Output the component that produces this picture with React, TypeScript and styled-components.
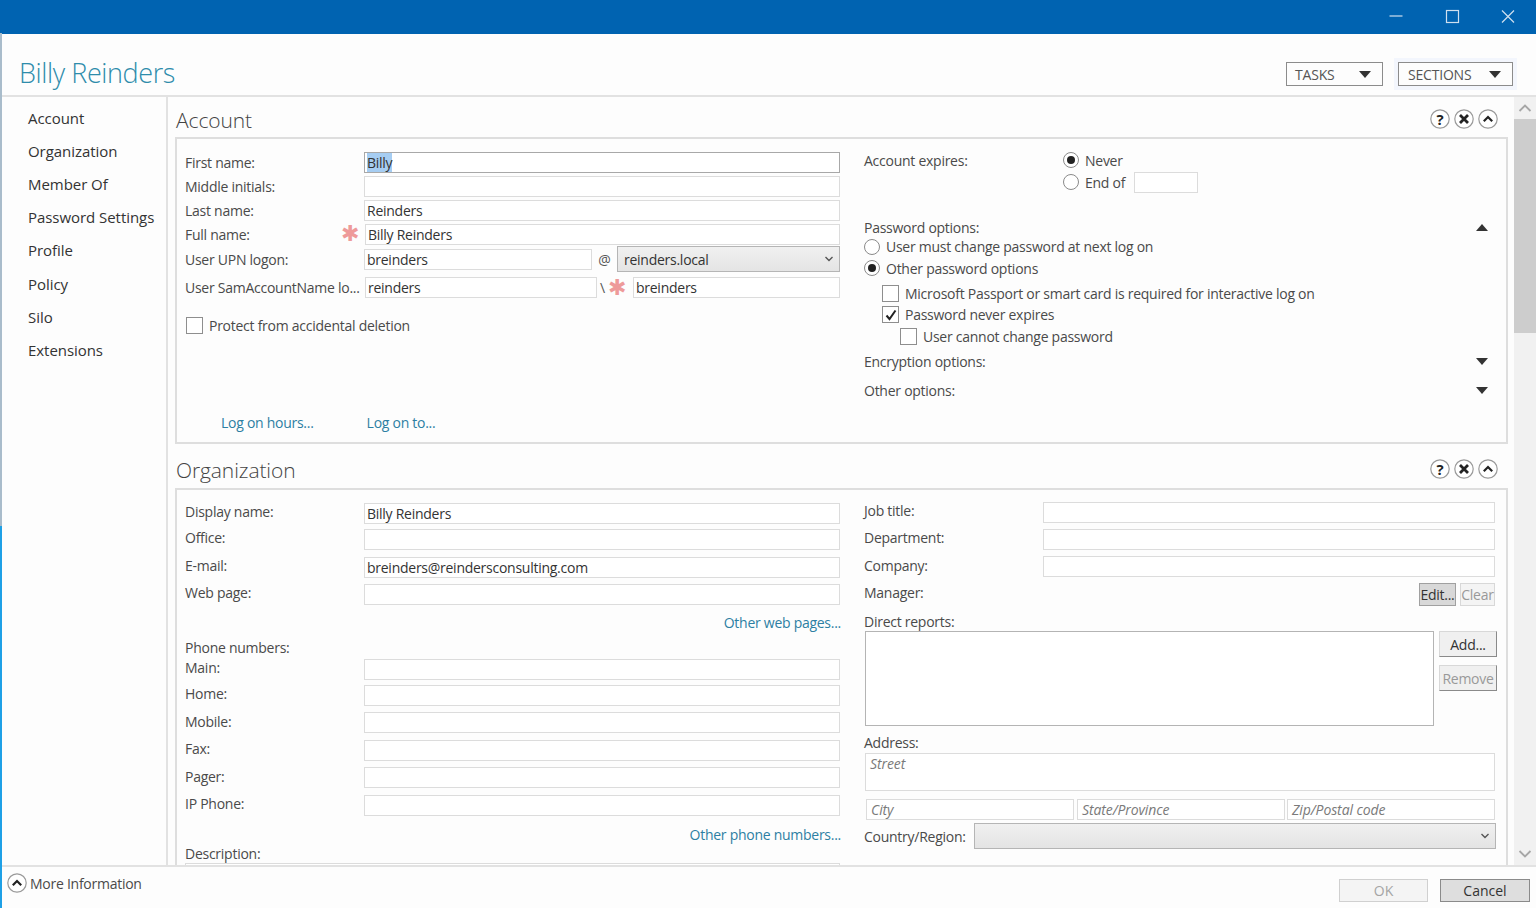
import { ReactNode } from 'react'
import styled, { createGlobalStyle } from 'styled-components'

const GlobalStyle = createGlobalStyle`
  html, body {
    margin: 0;
    padding: 0;
    overflow: hidden;
  }
  * {
    box-sizing: border-box;
  }
`

const Window = styled.div`
  width: 1536px;
  height: 908px;
  display: flex;
  flex-direction: column;
  background: #fdfdfd;
  color: #3c3c3c;
  font-family: 'Open Sans', 'Noto Sans', sans-serif;
  font-size: 14px;
  border-left: 2px solid;
  border-image: linear-gradient(to bottom, #0063b1 34px, #a9bccb 34px, #a9bccb 526px, #1ea0e6 526px) 1;
  overflow: hidden;
`

const TitleBar = styled.div`
  height: 34px;
  flex: none;
  margin-left: -2px;
  background: #0063b1;
  display: flex;
  justify-content: flex-end;
  align-items: center;
  padding-right: 17px;
  gap: 33.5px;
`

const WindowIcon = styled.svg`
  width: 22px;
  height: 22px;
  fill: none;
  stroke: #cfe0ef;
  stroke-width: 1.2;
`

const Header = styled.div`
  height: 63px;
  flex: none;
  display: flex;
  align-items: center;
  justify-content: space-between;
  border-bottom: 2px solid #e2e2e2;
  padding: 14px 23px 0 17px;
`

const Title = styled.h1`
  margin: 2px 0 0;
  font-size: 27px;
  font-weight: 300;
  letter-spacing: -0.4px;
  color: #2e8cab;
`

const HeaderButtons = styled.div`
  display: flex;
  gap: 15px;
  align-items: center;
  margin-top: 5px;
`

const DropButton = styled.div<{ $width: number; $glow?: boolean }>`
  width: ${(p) => p.$width}px;
  height: 24px;
  border: 1px solid #8c8c8c;
  display: flex;
  align-items: center;
  justify-content: space-between;
  padding: 0 11px 0 ${(p) => (p.$glow ? 9 : 8)}px;
  color: #555;
  font-size: 14px;
  letter-spacing: -0.2px;
  box-shadow: ${(p) => (p.$glow ? '0 0 0 4px #f3f6fd' : 'none')};
`

const DownArrow = styled.span<{ $up?: boolean }>`
  width: 0;
  height: 0;
  border-left: 6px solid transparent;
  border-right: 6px solid transparent;
  border-top: ${(p) => (p.$up ? '0' : '7px solid #333')};
  border-bottom: ${(p) => (p.$up ? '7px solid #333' : '0')};
`

const Body = styled.div`
  flex: 1;
  min-height: 0;
  display: flex;
`

const Nav = styled.nav`
  width: 166px;
  flex: none;
  border-right: 2px solid #e2e2e2;
  padding: 4px 0 0 26px;
`

const NavItem = styled.div`
  height: 33.2px;
  display: flex;
  align-items: center;
  font-size: 15px;
  letter-spacing: -0.05px;
  color: #333;
`

const Content = styled.main`
  flex: 1;
  min-width: 0;
  overflow: hidden;
  padding: 0 6px 0 7px;
`

const SectionHead = styled.div<{ $next?: boolean }>`
  height: ${(p) => (p.$next ? 29 : 40)}px;
  display: flex;
  align-items: center;
  justify-content: space-between;
  padding: ${(p) => (p.$next ? '0 10px 8px 1px' : '6px 10px 0 1px')};
`

const SectionTitle = styled.h2`
  margin: 0;
  font-size: 21px;
  font-weight: 300;
  letter-spacing: -0.1px;
  color: #444;
`

const RoundButtons = styled.div`
  display: flex;
  gap: 4px;
  margin-top: -2px;
`

const RoundIcon = styled.svg`
  width: 20px;
  height: 20px;
  display: block;
  flex: none;
`

const Panel = styled.section<{ $height?: number }>`
  border: 2px solid #dedede;
  height: ${(p) => (p.$height ? `${p.$height}px` : 'auto')};
  display: grid;
  grid-template-columns: 655px 632px;
  column-gap: 24px;
  padding: 10px 10px 0 8px;
  margin-bottom: 15px;
`

const Col = styled.div<{ $top?: number }>`
  display: flex;
  flex-direction: column;
  min-width: 0;
  padding-top: ${(p) => p.$top ?? 0}px;
`

const Row = styled.div<{ $h: number }>`
  height: ${(p) => p.$h}px;
  display: flex;
  align-items: center;
  flex: none;
`

const Label = styled.div<{ $w: number; $up?: number }>`
  width: ${(p) => p.$w}px;
  flex: none;
  padding-bottom: ${(p) => Math.max(p.$up ?? 0, 0)}px;
  padding-top: ${(p) => Math.max(-(p.$up ?? 0), 0)}px;
  display: flex;
  justify-content: space-between;
  align-items: center;
  white-space: nowrap;
  color: #4a4a4a;
  letter-spacing: -0.26px;
`

const Field = styled.div<{ $w?: number; $h?: number; $focus?: boolean; $trim?: boolean; $ml?: number; $stacked?: boolean }>`
  flex: ${(p) => (p.$w || p.$stacked ? 'none' : '1')};
  width: ${(p) => (p.$w ? `${p.$w}px` : 'auto')};
  min-width: 0;
  height: ${(p) => p.$h ?? 21}px;
  margin-right: ${(p) => (p.$trim ? 1 : 0)}px;
  margin-left: ${(p) => p.$ml ?? 0}px;
  background: #fff;
  border: 1px solid ${(p) => (p.$focus ? '#a8a8a8' : '#dcdcdc')};
  padding: 0 2px;
  line-height: 19px;
  color: #333;
  letter-spacing: -0.26px;
  white-space: nowrap;
`

const Selected = styled.span`
  background: #a6cdf2;
`

const Hint = styled.span`
  font-style: italic;
  color: #7a7a7a;
  padding-left: 2px;
  letter-spacing: -0.1px;
`

const Star = styled.span<{ $after?: number }>`
  width: 16px;
  flex: none;
  margin-right: ${(p) => p.$after ?? 0}px;
  text-align: center;
  color: #ee9a9a;
  font-family: 'DejaVu Sans', sans-serif;
  font-size: 22px;
  line-height: 20px;
`

const Select = styled.div<{ $w?: number }>`
  flex: ${(p) => (p.$w ? 'none' : '1')};
  width: ${(p) => (p.$w ? `${p.$w}px` : 'auto')};
  height: 26px;
  border: 1px solid #b5b5b5;
  background: linear-gradient(#f0f0f0, #e4e4e4);
  display: flex;
  align-items: center;
  justify-content: space-between;
  padding: 0 5px 0 6px;
  color: #333;
  letter-spacing: -0.26px;
`

const Sep = styled.span<{ $w: number }>`
  width: ${(p) => p.$w}px;
  flex: none;
  text-align: center;
  color: #555;
`

const CheckRow = styled.div<{ $h: number; $indent?: number }>`
  height: ${(p) => p.$h}px;
  display: flex;
  align-items: center;
  gap: 6px;
  flex: none;
  padding-left: ${(p) => p.$indent ?? 0}px;
  color: #4a4a4a;
  letter-spacing: -0.26px;
  white-space: nowrap;
`

const Box = styled.span`
  width: 17px;
  height: 17px;
  flex: none;
  background: #fff;
  border: 1px solid #8e8e8e;
  display: flex;
  align-items: center;
  justify-content: center;
`

const Radio = styled.span<{ $on?: boolean }>`
  width: 16px;
  height: 16px;
  flex: none;
  border-radius: 50%;
  background: #fff;
  border: 1px solid #8a8a8a;
  display: flex;
  align-items: center;
  justify-content: center;
  &::after {
    content: '';
    width: 8px;
    height: 8px;
    border-radius: 50%;
    background: ${(p) => (p.$on ? '#222' : 'transparent')};
  }
`

const TextLink = styled.span`
  color: #2d7fa3;
  letter-spacing: -0.27px;
  white-space: nowrap;
`

const LinkRow = styled.div<{ $h: number; $pl?: number; $gap?: number; $end?: boolean }>`
  height: ${(p) => p.$h}px;
  display: flex;
  align-items: center;
  flex: none;
  gap: ${(p) => p.$gap ?? 0}px;
  padding-left: ${(p) => p.$pl ?? 0}px;
  margin-right: ${(p) => (p.$end ? -1 : 0)}px;
  justify-content: ${(p) => (p.$end ? 'flex-end' : 'flex-start')};
`

const Spacer = styled.div<{ $h?: number; $w?: number }>`
  height: ${(p) => p.$h ?? 0}px;
  width: ${(p) => p.$w ?? 0}px;
  flex: none;
`

const Expander = styled.div<{ $h: number }>`
  height: ${(p) => p.$h}px;
  flex: none;
  display: flex;
  align-items: center;
  justify-content: space-between;
  padding-right: 8px;
  color: #4a4a4a;
  letter-spacing: -0.26px;
`

const SmallButton = styled.div<{ $w: number; $h: number; $variant?: 'active' | 'off' | 'raised' | 'raisedOff' }>`
  width: ${(p) => p.$w}px;
  height: ${(p) => p.$h}px;
  flex: none;
  display: flex;
  align-items: center;
  justify-content: center;
  letter-spacing: -0.26px;
  color: ${(p) => (p.$variant === 'off' || p.$variant === 'raisedOff' ? '#999' : '#333')};
  background: ${(p) => (p.$variant === 'active' ? '#d8d8d8' : p.$variant === 'off' ? '#f4f4f4' : '#f0f0f0')};
  border: 1px solid ${(p) => (p.$variant === 'active' ? '#a0a0a0' : '#d8d8d8')};
  border-right-color: ${(p) => (p.$variant?.startsWith('raised') ? '#8a8a8a' : undefined)};
  border-bottom-color: ${(p) => (p.$variant?.startsWith('raised') ? '#8a8a8a' : undefined)};
`

const ReportsRow = styled.div`
  display: flex;
  height: 95px;
  flex: none;
  gap: 5px;
`

const ReportsBox = styled.div`
  width: 569px;
  flex: none;
  margin-left: 1px;
  border: 1px solid #b4b4b4;
  background: #fff;
`

const ReportsButtons = styled.div`
  display: flex;
  flex-direction: column;
  gap: 8px;
`

const CityRow = styled.div`
  display: flex;
  gap: 2px;
  height: 21px;
  flex: none;
  margin-left: 2px;
`

const ScrollBar = styled.div`
  width: 22px;
  flex: none;
  background: #f1f1f1;
  display: flex;
  flex-direction: column;
  align-items: center;
`

const ScrollEnd = styled.div`
  height: 22px;
  width: 100%;
  flex: none;
  display: flex;
  align-items: center;
  justify-content: center;
`

const ScrollThumb = styled.div`
  width: 100%;
  height: 214px;
  flex: none;
  background: #cdcdcd;
`

const ScrollTrack = styled.div`
  flex: 1;
`

const Footer = styled.div`
  height: 43px;
  flex: none;
  border-top: 2px solid #e2e2e2;
  display: flex;
  align-items: flex-start;
  justify-content: space-between;
  padding: 6px 6px 0 5px;
`

const More = styled.div`
  display: flex;
  align-items: center;
  gap: 3px;
  color: #4a4a4a;
  letter-spacing: -0.26px;
`

const FooterButtons = styled.div`
  display: flex;
  gap: 12px;
  padding-top: 6px;
`

const FooterButton = styled.div<{ $off?: boolean }>`
  width: ${(p) => (p.$off ? 89 : 90)}px;
  height: 23px;
  display: flex;
  align-items: center;
  justify-content: center;
  color: ${(p) => (p.$off ? '#a5a5a5' : '#333')};
  background: ${(p) => (p.$off ? '#f4f4f4' : '#dedede')};
  border: 1px solid ${(p) => (p.$off ? '#d0d0d0' : '#8a8a8a')};
`

function Circle({ children }: { children: ReactNode }) {
  return (
    <RoundIcon viewBox="0 0 20 20">
      <circle cx="10" cy="10" r="9.2" fill="#fff" stroke="#9a9a9a" strokeWidth="1.2" />
      {children}
    </RoundIcon>
  )
}

const chevronUp = <path d="M5.8 12.2 L10 8 L14.2 12.2" fill="none" stroke="#222" strokeWidth="2.2" />

function SectionTools() {
  return (
    <RoundButtons>
      <Circle>
        <text x="10" y="15.5" textAnchor="middle" fontSize="15" fontWeight="700" fill="#222" fontFamily="'Open Sans', sans-serif">
          ?
        </text>
      </Circle>
      <Circle>
        <path d="M6 6 L14 14 M14 6 L6 14" stroke="#222" strokeWidth="2.8" />
      </Circle>
      <Circle>{chevronUp}</Circle>
    </RoundButtons>
  )
}

function Chevron() {
  return (
    <svg width="10" height="8" viewBox="0 0 10 8">
      <path d="M1.5 2 L5 5.5 L8.5 2" fill="none" stroke="#555" strokeWidth="1.4" />
    </svg>
  )
}

function ScrollArrow({ up }: { up?: boolean }) {
  return (
    <svg width="14" height="10" viewBox="0 0 14 10">
      <path d={up ? 'M1.5 8 L7 2.5 L12.5 8' : 'M1.5 2 L7 7.5 L12.5 2'} fill="none" stroke="#a6a6a6" strokeWidth="1.8" />
    </svg>
  )
}

function Check() {
  return (
    <svg width="14" height="14" viewBox="0 0 14 14">
      <path d="M2.5 7.5 L5.5 11 L11.5 2.5" fill="none" stroke="#222" strokeWidth="2" />
    </svg>
  )
}

const navItems = ['Account', 'Organization', 'Member Of', 'Password Settings', 'Profile', 'Policy', 'Silo', 'Extensions']

interface TextRowProps {
  label: string
  value?: string
  h: number
  up?: number
  trim?: boolean
}

function TextRow({ label, value, h, up = 0, trim }: TextRowProps) {
  return (
    <Row $h={h}>
      <Label $w={179} $up={up}>
        {label}
      </Label>
      <Field $trim={trim}>{value}</Field>
    </Row>
  )
}

function AccountLeft() {
  return (
    <Col $top={1}>
      <Row $h={24}>
        <Label $w={179}>First name:</Label>
        <Field $focus>
          <Selected>Billy</Selected>
        </Field>
      </Row>
      <TextRow label="Middle initials:" h={24} />
      <TextRow label="Last name:" value="Reinders" h={24} />
      <Row $h={24}>
        <Label $w={180}>
          Full name:
          <Star $after={8}>✱</Star>
        </Label>
        <Field>Billy Reinders</Field>
      </Row>
      <Row $h={26}>
        <Label $w={179}>User UPN logon:</Label>
        <Field $w={228}>breinders</Field>
        <Sep $w={25}>@</Sep>
        <Select>
          reinders.local
          <Chevron />
        </Select>
      </Row>
      <Row $h={31}>
        <Label $w={180}>User SamAccountName lo...</Label>
        <Field $w={232}>reinders</Field>
        <Sep $w={11}>\</Sep>
        <Star $after={9}>✱</Star>
        <Field>breinders</Field>
      </Row>
      <Spacer $h={7} />
      <CheckRow $h={30} $indent={1}>
        <Box />
        Protect from accidental deletion
      </CheckRow>
      <Spacer $h={67} />
      <LinkRow $h={30} $pl={36} $gap={53}>
        <TextLink>Log on hours...</TextLink>
        <TextLink>Log on to...</TextLink>
      </LinkRow>
    </Col>
  )
}

function AccountRight() {
  return (
    <Col>
      <Row $h={22}>
        <Label $w={199}>Account expires:</Label>
        <CheckRow $h={22}>
          <Radio $on />
          Never
        </CheckRow>
      </Row>
      <Row $h={22}>
        <Spacer $w={199} />
        <CheckRow $h={22}>
          <Radio />
          End of
          <Field $w={64} $ml={3} />
        </CheckRow>
      </Row>
      <Spacer $h={23} />
      <Expander $h={22}>
        Password options:
        <DownArrow $up />
      </Expander>
      <CheckRow $h={17}>
        <Radio />
        User must change password at next log on
      </CheckRow>
      <CheckRow $h={26}>
        <Radio $on />
        Other password options
      </CheckRow>
      <CheckRow $h={24} $indent={18}>
        <Box />
        Microsoft Passport or smart card is required for interactive log on
      </CheckRow>
      <CheckRow $h={19} $indent={18}>
        <Box>
          <Check />
        </Box>
        Password never expires
      </CheckRow>
      <CheckRow $h={24} $indent={36}>
        <Box />
        User cannot change password
      </CheckRow>
      <Expander $h={26}>
        Encryption options:
        <DownArrow />
      </Expander>
      <Expander $h={32}>
        Other options:
        <DownArrow />
      </Expander>
    </Col>
  )
}

const phoneRows = [
  { label: 'Main:', h: 24 },
  { label: 'Home:', h: 28 },
  { label: 'Mobile:', h: 27.5 },
  { label: 'Fax:', h: 27.5 },
  { label: 'Pager:', h: 27.5 },
  { label: 'IP Phone:', h: 27.5 },
]

function OrgLeft() {
  return (
    <Col>
      <TextRow label="Display name:" value="Billy Reinders" h={26} up={4} />
      <TextRow label="Office:" h={26} up={4} />
      <TextRow label="E-mail:" value="breinders@reindersconsulting.com" h={30} up={4} />
      <TextRow label="Web page:" h={24} up={4} />
      <LinkRow $h={32} $end>
        <TextLink>Other web pages...</TextLink>
      </LinkRow>
      <Row $h={19}>
        <Label $w={179}>Phone numbers:</Label>
      </Row>
      {phoneRows.map((row) => (
        <TextRow key={row.label} label={row.label} h={row.h} up={3} />
      ))}
      <LinkRow $h={30} $end>
        <TextLink>Other phone numbers...</TextLink>
      </LinkRow>
      <Row $h={14}>
        <Label $w={179} $up={5}>
          Description:
        </Label>
      </Row>
      <Field $h={40} $stacked />
    </Col>
  )
}

function OrgRight() {
  return (
    <Col>
      <TextRow label="Job title:" h={24} up={4} trim />
      <TextRow label="Department:" h={30} up={3} trim />
      <TextRow label="Company:" h={25} up={3} trim />
      <Row $h={31}>
        <Label $w={555} $up={5}>
          Manager:
        </Label>
        <SmallButton $w={37} $h={23} $variant="active">
          Edit...
        </SmallButton>
        <Spacer $w={4} />
        <SmallButton $w={35} $h={23} $variant="off">
          Clear
        </SmallButton>
      </Row>
      <Row $h={21}>
        <Label $w={200} $up={-1}>
          Direct reports:
        </Label>
      </Row>
      <ReportsRow>
        <ReportsBox />
        <ReportsButtons>
          <SmallButton $w={58} $h={26} $variant="raised">
            Add...
          </SmallButton>
          <SmallButton $w={58} $h={26} $variant="raisedOff">
            Remove
          </SmallButton>
        </ReportsButtons>
      </ReportsRow>
      <Row $h={27}>
        <Label $w={200} $up={-5}>
          Address:
        </Label>
      </Row>
      <Field $h={38} $trim $ml={1} $stacked>
        <Hint>Street</Hint>
      </Field>
      <Spacer $h={8} />
      <CityRow>
        <Field $trim>
          <Hint>City</Hint>
        </Field>
        <Field>
          <Hint>State/Province</Hint>
        </Field>
        <Field $trim>
          <Hint>Zip/Postal code</Hint>
        </Field>
      </CityRow>
      <Spacer $h={3} />
      <Row $h={26}>
        <Label $w={110}>Country/Region:</Label>
        <Select $w={522}>
          <span />
          <Chevron />
        </Select>
      </Row>
    </Col>
  )
}

export default function App() {
  return (
    <Window>
      <GlobalStyle />
      <TitleBar>
        <WindowIcon viewBox="0 0 22 22">
          <path d="M3.5 10 H16.5" />
        </WindowIcon>
        <WindowIcon viewBox="0 0 22 22">
          <rect x="4.5" y="4.5" width="12" height="12" />
        </WindowIcon>
        <WindowIcon viewBox="0 0 22 22">
          <path d="M5 4.5 L17 16.5 M17 4.5 L5 16.5" />
        </WindowIcon>
      </TitleBar>
      <Header>
        <Title>Billy Reinders</Title>
        <HeaderButtons>
          <DropButton $width={97}>
            TASKS
            <DownArrow />
          </DropButton>
          <DropButton $width={115} $glow>
            SECTIONS
            <DownArrow />
          </DropButton>
        </HeaderButtons>
      </Header>
      <Body>
        <Nav>
          {navItems.map((item) => (
            <NavItem key={item}>{item}</NavItem>
          ))}
        </Nav>
        <Content>
          <SectionHead>
            <SectionTitle>Account</SectionTitle>
            <SectionTools />
          </SectionHead>
          <Panel $height={307}>
            <AccountLeft />
            <AccountRight />
          </Panel>
          <SectionHead $next>
            <SectionTitle>Organization</SectionTitle>
            <SectionTools />
          </SectionHead>
          <Panel>
            <OrgLeft />
            <OrgRight />
          </Panel>
        </Content>
        <ScrollBar>
          <ScrollEnd>
            <ScrollArrow up />
          </ScrollEnd>
          <ScrollThumb />
          <ScrollTrack />
          <ScrollEnd>
            <ScrollArrow />
          </ScrollEnd>
        </ScrollBar>
      </Body>
      <Footer>
        <More>
          <Circle>{chevronUp}</Circle>
          More Information
        </More>
        <FooterButtons>
          <FooterButton $off>OK</FooterButton>
          <FooterButton>Cancel</FooterButton>
        </FooterButtons>
      </Footer>
    </Window>
  )
}
